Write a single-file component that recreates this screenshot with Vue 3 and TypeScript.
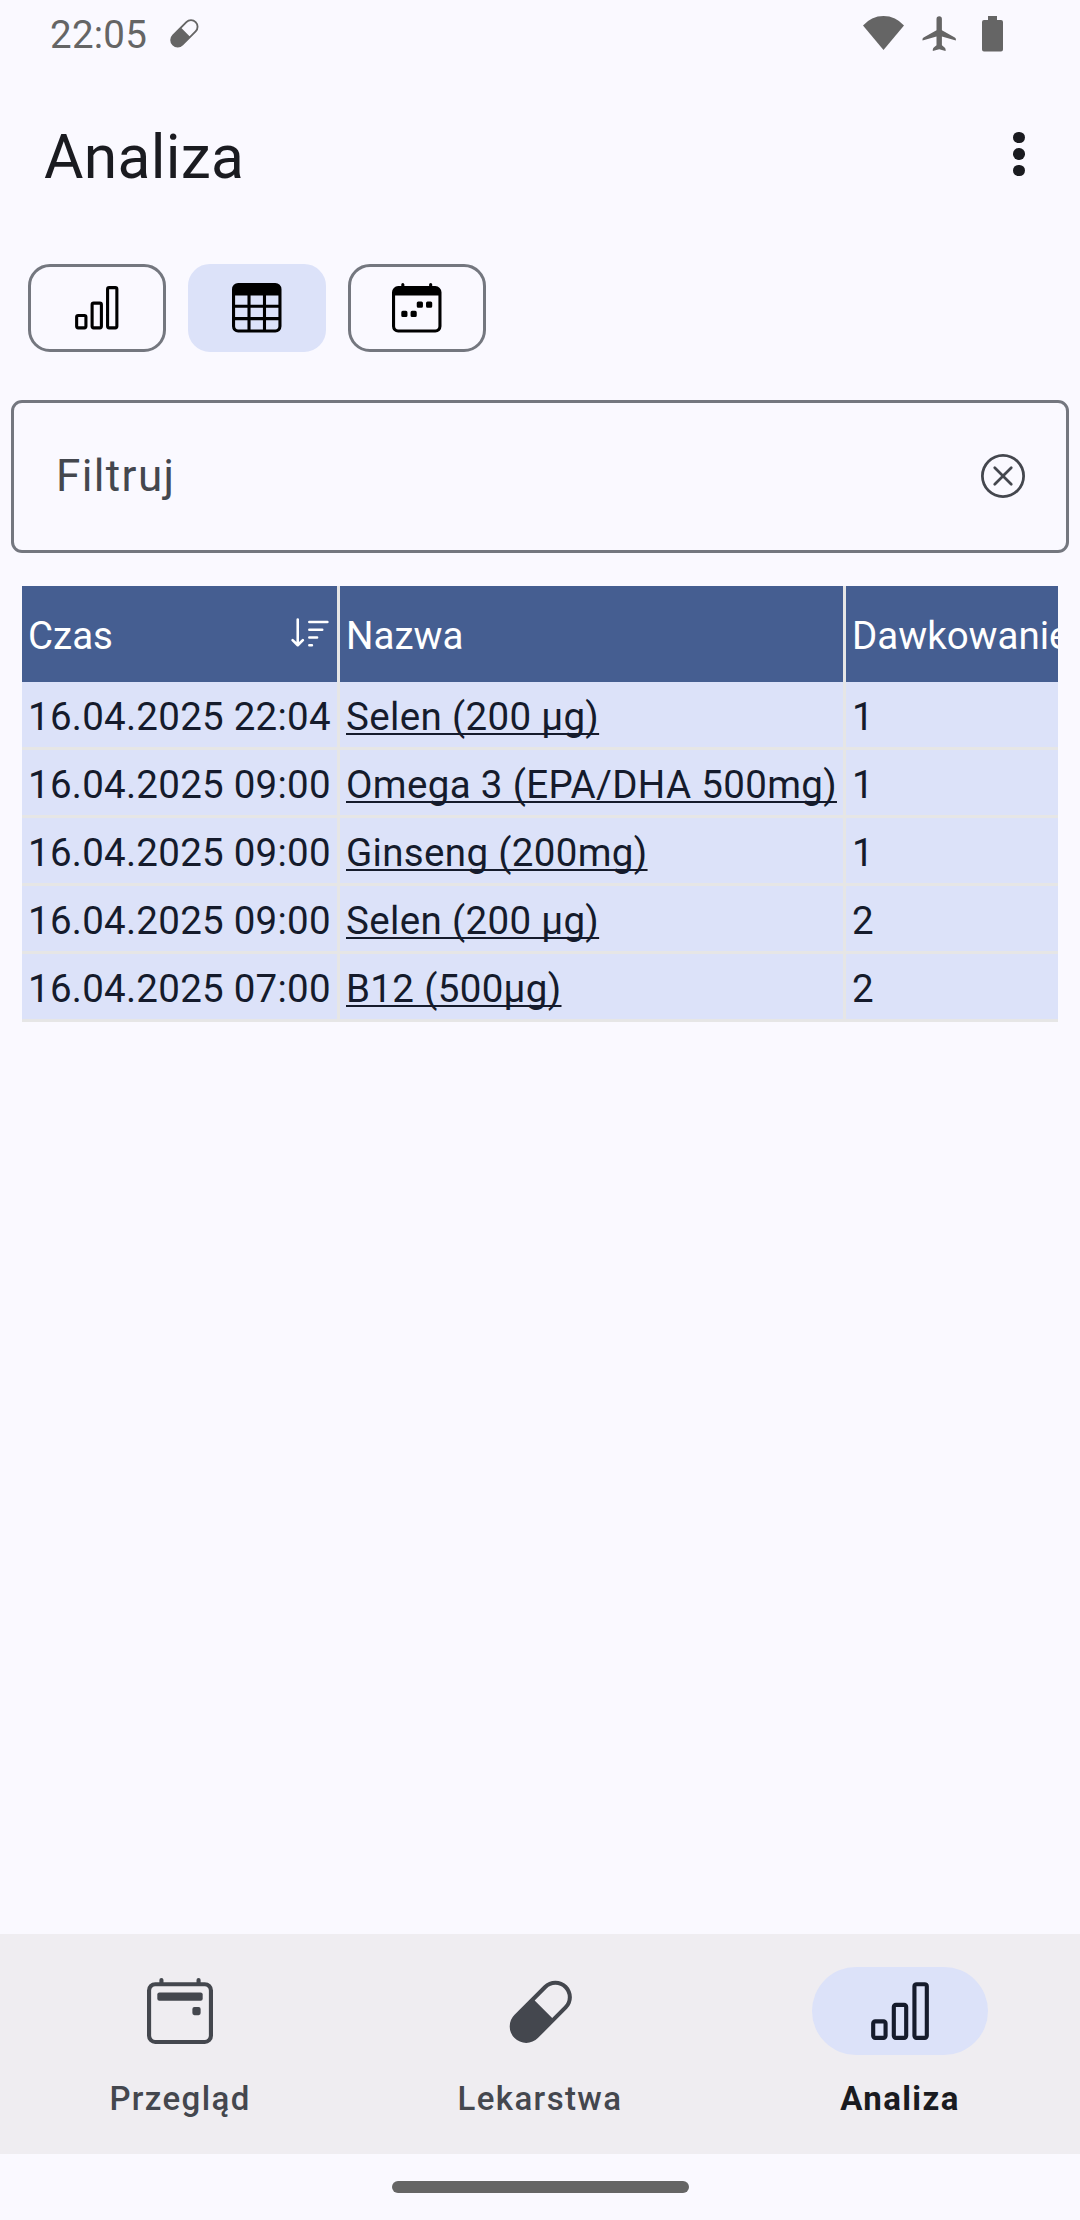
<script setup lang="ts">
import { ref } from 'vue'

interface Dose {
  time: string
  name: string
  dosage: string
}

interface IconItem {
  id: string
  label: string
  paths: string[]
}

const barChart: string =
  'M4 11H2v3h2zm5-4H7v7h2zm5-5v12h-2V2zm-2-1a1 1 0 0 0-1 1v12a1 1 0 0 0 1 1h2a1 1 0 0 0 1-1V2a1 1 0 0 0-1-1zM6 7a1 1 0 0 1 1-1h2a1 1 0 0 1 1 1v7a1 1 0 0 1-1 1H7a1 1 0 0 1-1-1zm-5 4a1 1 0 0 1 1-1h2a1 1 0 0 1 1 1v3a1 1 0 0 1-1 1H2a1 1 0 0 1-1-1z'
const capsule: string =
  'M1.828 8.9 8.9 1.827a4 4 0 1 1 5.657 5.657l-7.07 7.071A4 4 0 1 1 1.827 8.9Zm9.128.771 2.893-2.893a3 3 0 1 0-4.243-4.242L6.713 5.429z'
const sortDown: string =
  'M3.5 2.5a.5.5 0 0 0-1 0v8.793l-1.146-1.147a.5.5 0 0 0-.708.708l2 1.999.007.007a.497.497 0 0 0 .7-.006l2-2a.5.5 0 0 0-.707-.708L3.5 11.293zm3.5 1a.5.5 0 0 1 .5-.5h7a.5.5 0 0 1 0 1h-7a.5.5 0 0 1-.5-.5M7.5 6a.5.5 0 0 0 0 1h5a.5.5 0 0 0 0-1zm0 3a.5.5 0 0 0 0 1h3a.5.5 0 0 0 0-1zm0 3a.5.5 0 0 0 0 1h1a.5.5 0 0 0 0-1z'

const views: IconItem[] = [
  { id: 'chart', label: 'Wykres', paths: [barChart] },
  {
    id: 'table',
    label: 'Tabela',
    paths: [
      'M0 2a2 2 0 0 1 2-2h12a2 2 0 0 1 2 2v12a2 2 0 0 1-2 2H2a2 2 0 0 1-2-2zm15 2h-4v3h4zm0 4h-4v3h4zm0 4h-4v3h3a1 1 0 0 0 1-1zm-5 3v-3H6v3zm-5 0v-3H1v2a1 1 0 0 0 1 1zm-4-4h4V8H1zm0-4h4V4H1zm5-3v3h4V4zm4 4H6v3h4z',
    ],
  },
  {
    id: 'calendar',
    label: 'Kalendarz',
    paths: [
      'M11 6.5a.5.5 0 0 1 .5-.5h1a.5.5 0 0 1 .5.5v1a.5.5 0 0 1-.5.5h-1a.5.5 0 0 1-.5-.5zm-3 0a.5.5 0 0 1 .5-.5h1a.5.5 0 0 1 .5.5v1a.5.5 0 0 1-.5.5h-1a.5.5 0 0 1-.5-.5zm-5 3a.5.5 0 0 1 .5-.5h1a.5.5 0 0 1 .5.5v1a.5.5 0 0 1-.5.5h-1a.5.5 0 0 1-.5-.5zm3 0a.5.5 0 0 1 .5-.5h1a.5.5 0 0 1 .5.5v1a.5.5 0 0 1-.5.5h-1a.5.5 0 0 1-.5-.5z',
      'M3.5 0a.5.5 0 0 1 .5.5V1h8V.5a.5.5 0 0 1 1 0V1h1a2 2 0 0 1 2 2v11a2 2 0 0 1-2 2H2a2 2 0 0 1-2-2V3a2 2 0 0 1 2-2h1V.5a.5.5 0 0 1 .5-.5M1 4v10a1 1 0 0 0 1 1h12a1 1 0 0 0 1-1V4z',
    ],
  },
]

const tabs: IconItem[] = [
  {
    id: 'overview',
    label: 'Przegląd',
    paths: [
      'M11 7.5a.5.5 0 0 1 .5-.5h1a.5.5 0 0 1 .5.5v1a.5.5 0 0 1-.5.5h-1a.5.5 0 0 1-.5-.5z',
      'M3.5 0a.5.5 0 0 1 .5.5V1h8V.5a.5.5 0 0 1 1 0V1h1a2 2 0 0 1 2 2v11a2 2 0 0 1-2 2H2a2 2 0 0 1-2-2V3a2 2 0 0 1 2-2h1V.5a.5.5 0 0 1 .5-.5M2 2a1 1 0 0 0-1 1v11a1 1 0 0 0 1 1h12a1 1 0 0 0 1-1V3a1 1 0 0 0-1-1z',
      'M2.5 4a.5.5 0 0 1 .5-.5h10a.5.5 0 0 1 .5.5v1a.5.5 0 0 1-.5.5H3a.5.5 0 0 1-.5-.5z',
    ],
  },
  { id: 'medicines', label: 'Lekarstwa', paths: [capsule] },
  { id: 'analysis', label: 'Analiza', paths: [barChart] },
]

const doses: Dose[] = [
  { time: '16.04.2025 22:04', name: 'Selen (200 µg)', dosage: '1' },
  { time: '16.04.2025 09:00', name: 'Omega 3 (EPA/DHA 500mg)', dosage: '1' },
  { time: '16.04.2025 09:00', name: 'Ginseng (200mg)', dosage: '1' },
  { time: '16.04.2025 09:00', name: 'Selen (200 µg)', dosage: '2' },
  { time: '16.04.2025 07:00', name: 'B12 (500µg)', dosage: '2' },
]

const activeView = ref<string>('table')
const activeTab = ref<string>('analysis')
const filter = ref<string>('')
</script>

<template>
  <div class="screen">
    <div class="status">
      <span class="clock">22:05</span>
      <svg class="status-pill" viewBox="0 0 16 16"><path :d="capsule" /></svg>
      <svg class="status-icons" viewBox="0 0 144 40">
        <path d="M23.5 37 3 12.4A26.9 26.9 0 0 1 44 12.4Z" />
        <path
          d="M79.2 3.2a2.7 2.7 0 0 1 2.7 2.7V17.3L94.8 24.4Q95.9 25.1 95.9 26.3V27.6L81.9 23.6V32.2L84.6 34.4Q85.6 35.2 85.6 36.4V38L79.2 36.2L72.8 38V36.4Q72.8 35.2 73.8 34.4L76.5 32.2V23.6L62.5 27.6V26.3Q62.5 25.1 63.6 24.4L76.5 17.3V5.9A2.7 2.7 0 0 1 79.2 3.2Z"
        />
        <path d="M128 3h9v4h4a2 2 0 0 1 2 2v27.6a2 2 0 0 1-2 2h-17a2 2 0 0 1-2-2V9a2 2 0 0 1 2-2h4z" />
      </svg>
    </div>

    <header class="appbar">
      <h1>Analiza</h1>
      <button class="more" aria-label="Więcej">
        <i></i><i></i><i></i>
      </button>
    </header>

    <div class="views">
      <button
        v-for="view in views"
        :key="view.id"
        class="view"
        :class="{ selected: view.id === activeView }"
        :aria-label="view.label"
        @click="activeView = view.id"
      >
        <svg viewBox="0 0 16 16"><path v-for="d in view.paths" :key="d" :d="d" /></svg>
      </button>
    </div>

    <div class="filter">
      <input v-model="filter" type="text" placeholder="Filtruj" />
      <svg viewBox="0 0 16 16" @click="filter = ''">
        <path d="M8 15A7 7 0 1 1 8 1a7 7 0 0 1 0 14m0 1A8 8 0 1 0 8 0a8 8 0 0 0 0 16" />
        <path
          d="M4.646 4.646a.5.5 0 0 1 .708 0L8 7.293l2.646-2.647a.5.5 0 0 1 .708.708L8.707 8l2.647 2.646a.5.5 0 0 1-.708.708L8 8.707l-2.646 2.647a.5.5 0 0 1-.708-.708L7.293 8 4.646 5.354a.5.5 0 0 1 0-.708"
        />
      </svg>
    </div>

    <div class="table">
      <div class="row head">
        <div class="cell">
          <span>Czas</span>
          <svg viewBox="0 0 16 16"><path :d="sortDown" /></svg>
        </div>
        <div class="cell">Nazwa</div>
        <div class="cell">Dawkowanie</div>
      </div>
      <div v-for="(dose, i) in doses" :key="i" class="row">
        <div class="cell time">{{ dose.time }}</div>
        <div class="cell"><span class="link">{{ dose.name }}</span></div>
        <div class="cell">{{ dose.dosage }}</div>
      </div>
    </div>

    <nav class="tabs">
      <button
        v-for="tab in tabs"
        :key="tab.id"
        class="tab"
        :class="{ active: tab.id === activeTab }"
        @click="activeTab = tab.id"
      >
        <span class="indicator">
          <svg viewBox="0 0 16 16"><path v-for="d in tab.paths" :key="d" :d="d" /></svg>
        </span>
        <span class="tab-label">{{ tab.label }}</span>
      </button>
    </nav>
    <div class="gesture"><div class="handle"></div></div>
  </div>
</template>

<style>
body {
  margin: 0;
  background: #faf9ff;
}
</style>

<style scoped>
.screen {
  box-sizing: border-box;
  display: flex;
  flex-direction: column;
  width: 1080px;
  height: 2220px;
  overflow: hidden;
  background: #faf9ff;
  color: #1a1b20;
  font-family: Roboto, sans-serif;
}
.screen * {
  box-sizing: border-box;
}
svg {
  display: block;
  flex: none;
  fill: currentColor;
}
button {
  margin: 0;
  padding: 0;
  border: 0;
  background: none;
  color: inherit;
  font: inherit;
}
.status {
  display: flex;
  flex: none;
  align-items: center;
  height: 66px;
  padding: 0 76px 0 50px;
  color: #656565;
}
.clock {
  padding-top: 4px;
  width: 119px;
  font-size: 38.5px;
  line-height: 62px;
  letter-spacing: 0.25px;
}
.status-pill {
  width: 30px;
  height: 30px;
}
.status-icons {
  width: 144px;
  height: 40px;
  margin-left: auto;
  margin-top: -1px;
}
.appbar {
  display: flex;
  flex: none;
  align-items: center;
  justify-content: space-between;
  height: 176px;
  padding: 0 44px;
}
h1 {
  margin: 0;
  padding-top: 7px;
  font-size: 60.5px;
  font-weight: 400;
  line-height: 72px;
  letter-spacing: 0.3px;
}
.more {
  display: flex;
  flex-direction: column;
  align-items: center;
  gap: 5px;
  width: 34px;
}
.more i {
  width: 11.5px;
  height: 11.5px;
  border-radius: 50%;
  background: #1a1b20;
}
.views {
  display: flex;
  flex: none;
  gap: 22px;
  padding: 22px 28px 0;
}
.view {
  display: flex;
  align-items: center;
  justify-content: center;
  width: 138px;
  height: 88px;
  border: 3px solid #74777f;
  border-radius: 22px;
  color: #000;
}
.view.selected {
  border-color: #dce2f9;
  background: #dce2f9;
}
.view svg {
  width: 49.5px;
  height: 49.5px;
}
.filter {
  display: flex;
  flex: none;
  align-items: center;
  justify-content: space-between;
  height: 153px;
  margin: 48px 11px 0;
  padding: 0 41px 1px 42px;
  border: 3px solid #74777f;
  border-radius: 11px;
  color: #44474e;
}
.filter input {
  flex: 1;
  min-width: 0;
  height: 52px;
  padding: 0;
  border: 0;
  outline: 0;
  background: none;
  color: #44474e;
  font: 44px Roboto, sans-serif;
  letter-spacing: 1.375px;
}
.filter input::placeholder {
  color: #44474e;
  opacity: 1;
}
.filter svg {
  width: 44px;
  height: 44px;
}
.table {
  flex: none;
  width: 1036px;
  margin: 33px 22px 0;
  overflow: hidden;
  color: #151b2c;
  font-size: 38.5px;
}
.row {
  display: grid;
  grid-template-columns: 318px 506px 212px;
  height: 68px;
}
.cell {
  display: flex;
  align-items: center;
  justify-content: space-between;
  min-width: 0;
  padding: 4px 6px 0;
  border-right: 3px solid #e6e6e6;
  border-bottom: 3px solid #e6e6e6;
  background: #dce2f9;
  line-height: 46px;
  white-space: nowrap;
}
.cell:last-child {
  border-right: 0;
}
.head {
  height: 96px;
}
.head .cell {
  border-bottom: 0;
  background: #455e91;
  color: #fff;
}
.head svg {
  width: 41.25px;
  height: 41.25px;
  margin-top: -4px;
}
.time {
  letter-spacing: 0.25px;
}
.link {
  letter-spacing: 0.34px;
  text-decoration: underline;
  text-decoration-skip-ink: none;
  text-decoration-thickness: 2px;
  text-underline-offset: 3px;
}
.tabs {
  display: flex;
  flex: none;
  height: 220px;
  margin-top: auto;
  background: #efedf1;
}
.tab {
  display: flex;
  flex: 1;
  flex-direction: column;
  align-items: center;
  padding-top: 33px;
  color: #44474e;
}
.indicator {
  display: flex;
  align-items: center;
  justify-content: center;
  width: 176px;
  height: 88px;
  border-radius: 44px;
}
.indicator svg {
  width: 66px;
  height: 66px;
}
.tab-label {
  margin-top: 24px;
  font-size: 33px;
  font-weight: 500;
  line-height: 40px;
  letter-spacing: 1.375px;
}
.active .indicator {
  background: #dce2f9;
  color: #151b2c;
}
.active .tab-label {
  color: #1a1b20;
  font-weight: 700;
}
.gesture {
  display: flex;
  flex: none;
  justify-content: center;
  height: 66px;
  padding-top: 27px;
}
.handle {
  width: 297px;
  height: 12px;
  border-radius: 6px;
  background: #656565;
}
</style>
